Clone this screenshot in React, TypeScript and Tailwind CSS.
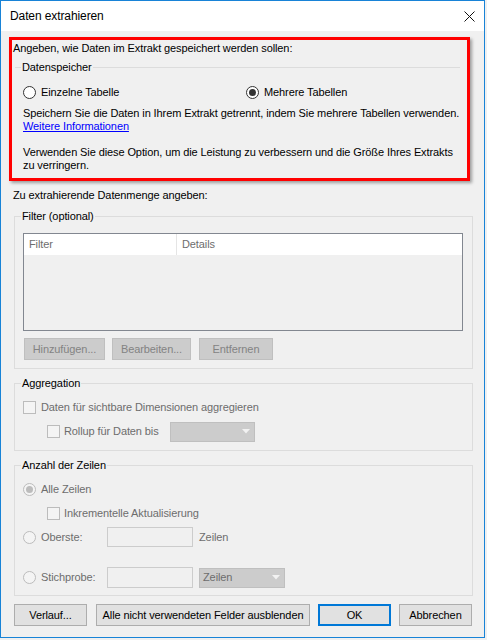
import React from "react";

function Radio({ checked, disabled }: { checked?: boolean; disabled?: boolean }) {
  return (
    <span
      className={
        disabled
          ? "flex h-[13px] w-[13px] shrink-0 items-center justify-center rounded-full border border-[#bcbcbc] bg-[#f4f4f4]"
          : "flex h-[13px] w-[13px] shrink-0 items-center justify-center rounded-full border border-[#333333] bg-white"
      }
    >
      {checked ? (
        <span className={disabled ? "h-[7px] w-[7px] rounded-full bg-[#bcbcbc]" : "h-[7px] w-[7px] rounded-full bg-[#333333]"} />
      ) : null}
    </span>
  );
}

function Check() {
  return <span className="block h-[13px] w-[13px] shrink-0 border border-[#bcbcbc] bg-[#f4f4f4]" />;
}

function Arrow() {
  return (
    <svg width="8" height="5" viewBox="0 0 8 5" className="shrink-0">
      <polygon points="0,0 8,0 4,4.5" fill="#f2f2f2" />
    </svg>
  );
}

function DisBtn({ w, label, ml }: { w: string; label: string; ml: string }) {
  return (
    <div className={`${w} ${ml} flex h-[22px] items-center justify-center border border-[#bfbfbf] bg-[#cccccc] text-[#838383]`}>
      {label}
    </div>
  );
}

export default function App() {
  return (
    <div className="h-[640px] w-[487px] whitespace-nowrap bg-[#f0f0f0] font-['Liberation_Sans',Arial,sans-serif] text-[11px] leading-[15px] tracking-[-0.1px] text-black">
      <div className="flex h-[638px] w-[485px] flex-col border border-[#1883d7] bg-[#f0f0f0]">
        {/* title bar */}
        <div className="flex h-[30px] shrink-0 items-center justify-between bg-white pl-[9px] pr-[9px]">
          <span className="text-[12px]">Daten extrahieren</span>
          <svg width="11" height="11" viewBox="0 0 11 11">
            <path d="M0.5 0.5 L10.5 10.5 M10.5 0.5 L0.5 10.5" stroke="#111" strokeWidth="1" fill="none" />
          </svg>
        </div>

        {/* highlighted box */}
        <div className="ml-[8px] mt-[6px] h-[144px] w-[461px] shrink-0 border-[3px] border-[#ff0000] pl-[1px] pt-[1px] shadow-[2px_2px_3px_rgba(0,0,0,0.35)]">
          <div>Angeben, wie Daten im Extrakt gespeichert werden sollen:</div>
          <div className="mt-[4px] flex w-[447px] items-center pl-[2px]">
            <span className="w-[6px] border-t border-[#dcdcdc]" />
            <span className="px-[1px]">Datenspeicher</span>
            <span className="flex-1 border-t border-[#dcdcdc]" />
          </div>
          <div className="ml-[10px] mt-[10px] flex h-[15px] items-center">
            <div className="flex w-[223px] items-center">
              <Radio />
              <span className="ml-[5px]">Einzelne Tabelle</span>
            </div>
            <div className="flex items-center">
              <Radio checked />
              <span className="ml-[5px]">Mehrere Tabellen</span>
            </div>
          </div>
          <div className="ml-[10px] mt-[7px] leading-[13px]">
            <div>Speichern Sie die Daten in Ihrem Extrakt getrennt, indem Sie mehrere Tabellen verwenden.</div>
            <div>
              <span className="text-[#0000ff] underline">Weitere Informationen</span>
            </div>
            <div className="h-[13px]" />
            <div>Verwenden Sie diese Option, um die Leistung zu verbessern und die Größe Ihres Extrakts</div>
            <div>zu verringern.</div>
          </div>
        </div>

        <div className="ml-[12px] mt-[7px]">Zu extrahierende Datenmenge angeben:</div>

        {/* Filter */}
        <fieldset className="ml-[13px] mt-[6px] h-[160px] w-[459px] shrink-0 border border-[#dcdcdc]">
          <legend className="ml-[6px] px-[1px]">Filter (optional)</legend>
          <div className="ml-[8px] mt-[9px] h-[98px] w-[440px] border border-[#828790]">
            <div className="flex h-[21px] bg-white text-[#6d6d6d]">
              <div className="flex w-[153px] items-center border-r border-[#e5e5e5] pl-[5px]">Filter</div>
              <div className="flex items-center pl-[5px]">Details</div>
            </div>
          </div>
          <div className="ml-[9px] mt-[7px] flex">
            <DisBtn w="w-[81px]" ml="ml-0" label="Hinzufügen..." />
            <DisBtn w="w-[79px]" ml="ml-[7px]" label="Bearbeiten..." />
            <DisBtn w="w-[74px]" ml="ml-[8px]" label="Entfernen" />
          </div>
        </fieldset>

        {/* Aggregation */}
        <fieldset className="ml-[13px] mt-[7px] h-[75px] w-[459px] shrink-0 border border-[#dcdcdc]">
          <legend className="ml-[6px] px-[1px]">Aggregation</legend>
          <div className="ml-[8px] mt-[9px] flex h-[15px] items-center text-[#6d6d6d]">
            <Check />
            <span className="ml-[5px]">Daten für sichtbare Dimensionen aggregieren</span>
          </div>
          <div className="ml-[32px] mt-[6px] flex h-[21px] items-center text-[#6d6d6d]">
            <Check />
            <span className="ml-[4px] w-[106px]">Rollup für Daten bis</span>
            <div className="flex h-[20px] w-[85px] items-center justify-end border border-[#bfbfbf] bg-[#cccccc] pr-[4px]">
              <Arrow />
            </div>
          </div>
        </fieldset>

        {/* Anzahl der Zeilen */}
        <fieldset className="ml-[13px] mt-[7px] h-[138px] w-[459px] shrink-0 border border-[#dcdcdc]">
          <legend className="ml-[6px] px-[1px]">Anzahl der Zeilen</legend>
          <div className="ml-[8px] mt-[9px] flex h-[15px] items-center text-[#6d6d6d]">
            <Radio checked disabled />
            <span className="ml-[5px]">Alle Zeilen</span>
          </div>
          <div className="ml-[32px] mt-[9px] flex h-[15px] items-center text-[#6d6d6d]">
            <Check />
            <span className="ml-[4px]">Inkrementelle Aktualisierung</span>
          </div>
          <div className="ml-[8px] mt-[6px] flex h-[20px] items-center text-[#6d6d6d]">
            <Radio disabled />
            <span className="ml-[5px] w-[66px]">Oberste:</span>
            <div className="h-[20px] w-[86px] border border-[#cccccc] bg-[#f0f0f0]" />
            <span className="ml-[6px]">Zeilen</span>
          </div>
          <div className="ml-[8px] mt-[20px] flex h-[21px] items-center text-[#6d6d6d]">
            <Radio disabled />
            <span className="ml-[5px] w-[66px]">Stichprobe:</span>
            <div className="h-[21px] w-[86px] border border-[#cccccc] bg-[#f0f0f0]" />
            <div className="ml-[6px] flex h-[20px] w-[86px] items-center justify-between border border-[#bfbfbf] bg-[#cccccc] pl-[3px] pr-[4px]">
              <span>Zeilen</span>
              <Arrow />
            </div>
          </div>
        </fieldset>

        {/* bottom buttons */}
        <div className="ml-[13px] mt-[8px] flex">
          <div className="flex h-[22px] w-[73px] items-center justify-center border border-[#adadad] bg-[#e1e1e1]">Verlauf...</div>
          <div className="ml-[9px] flex h-[22px] w-[214px] items-center justify-center border border-[#adadad] bg-[#e1e1e1]">
            Alle nicht verwendeten Felder ausblenden
          </div>
          <div className="ml-[8px] flex h-[22px] w-[73px] items-center justify-center border-2 border-[#0078d7] bg-[#e1e1e1]">OK</div>
          <div className="ml-[8px] flex h-[22px] w-[73px] items-center justify-center border border-[#adadad] bg-[#e1e1e1]">Abbrechen</div>
        </div>
      </div>
    </div>
  );
}
